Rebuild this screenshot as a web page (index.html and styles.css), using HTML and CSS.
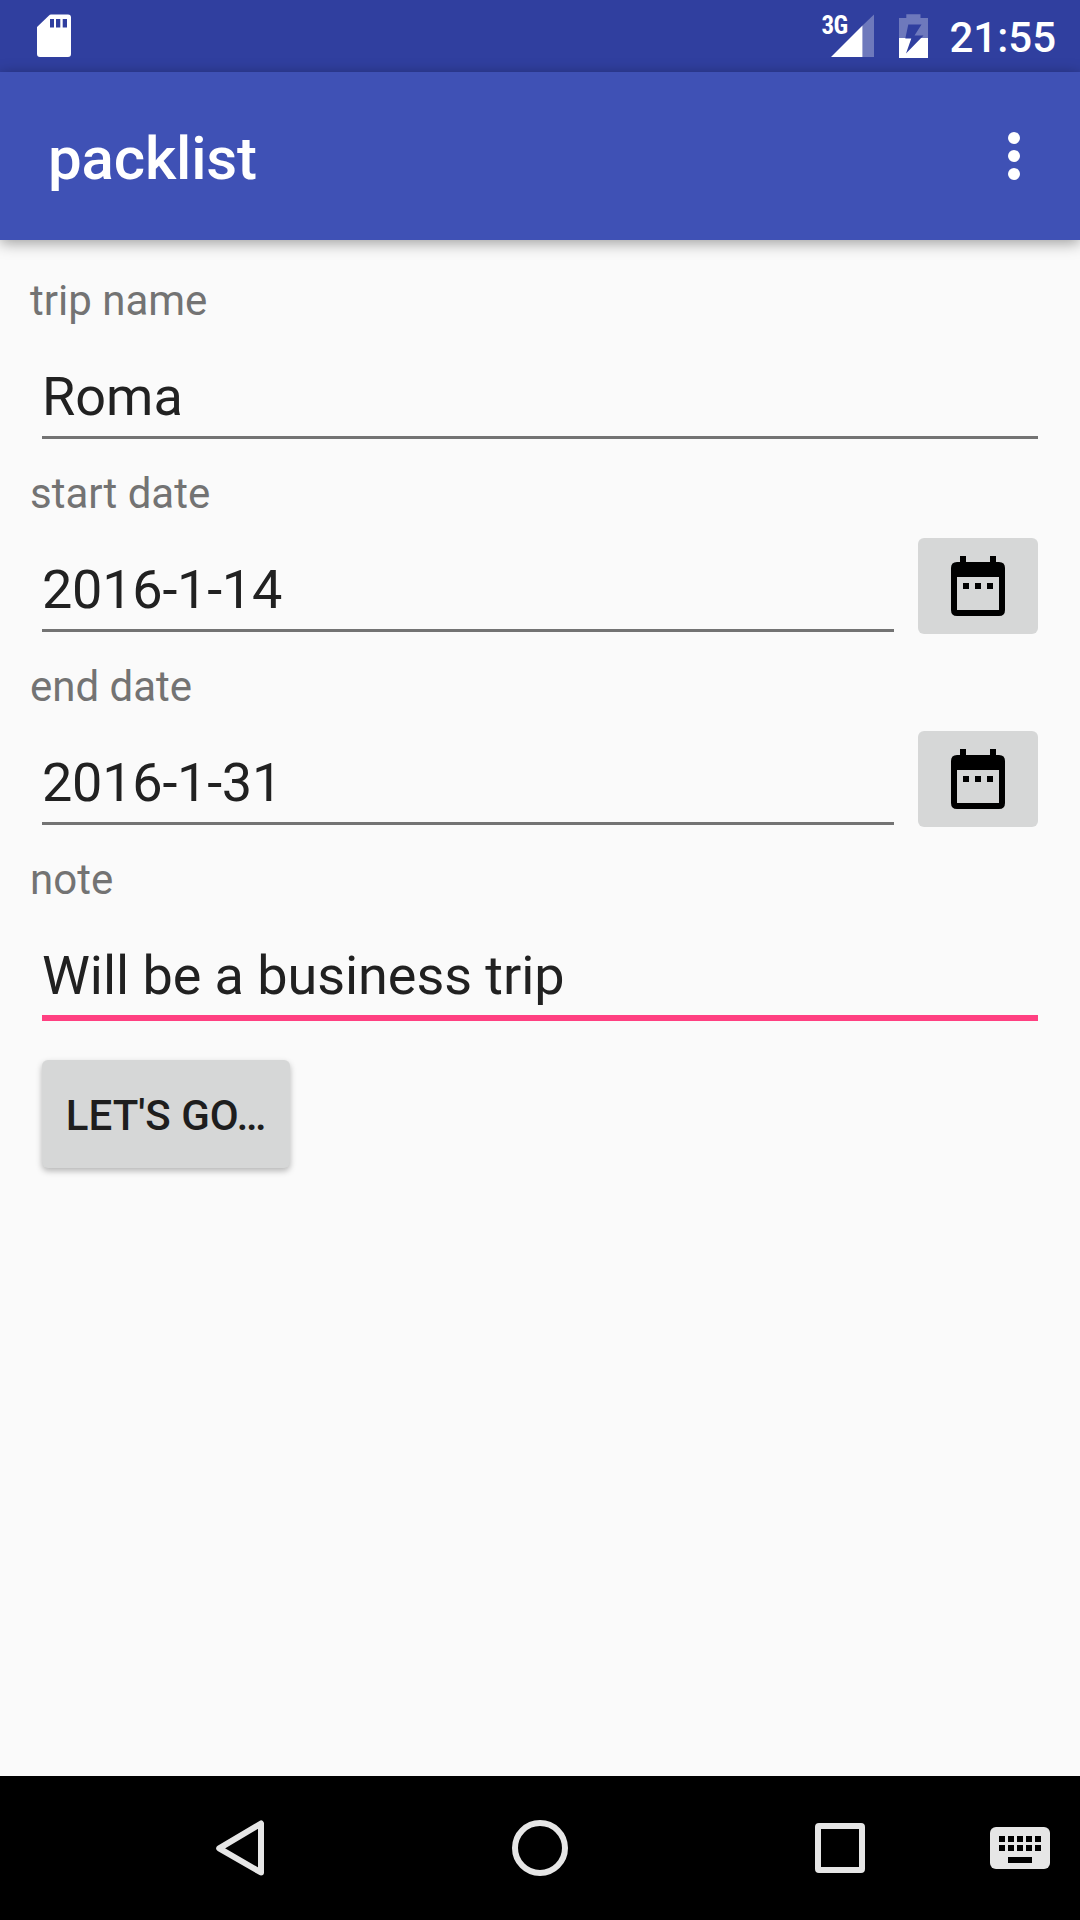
FILE: index.html
```
<!DOCTYPE html>
<html lang="en">
<head>
<meta charset="utf-8">
<title>packlist</title>
<link rel="stylesheet" href="styles.css">
</head>
<body>
<div class="screen">
  <div class="status-bar">
    <svg class="sd-icon" width="34" height="44" viewBox="0 0 34 44"><path fill="#fff" fill-rule="evenodd" d="M14 .6H31Q34 .6 34 3.6V40Q34 43 31 43H3Q0 43 0 40V13L12 1.4Q12.800 .6 14 .6ZM13 5V13.500H17V5ZM19 5V13.500H23.300V5ZM25.700 5V13.500H30V5Z"/></svg>
    <div class="status-right">
      <span class="network">3G</span>
      <svg class="signal-icon" width="43" height="44" viewBox="0 0 43 44"><path fill="#fff" fill-opacity=".3" d="M31.500 11.500 43 .5V43H31.500Z"/><path fill="#fff" d="M0 43 31.500 11.500V43Z"/></svg>
      <svg class="battery-icon" width="29" height="44" viewBox="0 0 29 44"><path fill="#fff" fill-opacity=".3" d="M7.300 .3H21.500V4H29V24H0V4H7.300Z"/><path fill="#fff" d="M0 24H29V44H0Z"/><path fill="#303f9f" d="M9.300 10.500H22.500L15.500 21.500H24.500L7 39.500L12.300 24.500H6.300Z"/></svg>
      <span class="clock">21:55</span>
    </div>
  </div>
  <header class="app-bar">
    <h1 class="title">packlist</h1>
    <svg class="menu-icon" width="12" height="48" viewBox="0 0 12 48" fill="#fff"><circle cx="6" cy="6" r="6"/><circle cx="6" cy="24" r="6"/><circle cx="6" cy="42" r="6"/></svg>
  </header>
  <main class="form">
    <div class="group">
      <div class="label">trip name</div>
      <div class="row"><div class="field">Roma</div></div>
    </div>
    <div class="group">
      <div class="label">start date</div>
      <div class="row">
        <div class="field date">2016-1-14</div>
        <div class="date-button"><svg width="54" height="60" viewBox="0 0 54 60"><path fill-rule="evenodd" d="M9 0H15V6H39V0H45V6H48Q54 6 54 12V54Q54 60 48 60H6Q0 60 0 54V12Q0 6 6 6H9ZM6 21V54H48V21ZM12 27H18V33H12ZM24 27H30V33H24ZM36 27H42V33H36Z"/></svg></div>
      </div>
    </div>
    <div class="group">
      <div class="label">end date</div>
      <div class="row">
        <div class="field date">2016-1-31</div>
        <div class="date-button"><svg width="54" height="60" viewBox="0 0 54 60"><path fill-rule="evenodd" d="M9 0H15V6H39V0H45V6H48Q54 6 54 12V54Q54 60 48 60H6Q0 60 0 54V12Q0 6 6 6H9ZM6 21V54H48V21ZM12 27H18V33H12ZM24 27H30V33H24ZM36 27H42V33H36Z"/></svg></div>
      </div>
    </div>
    <div class="group">
      <div class="label">note</div>
      <div class="row"><div class="field focused">Will be a business trip</div></div>
    </div>
    <div class="submit">LET'S GO…</div>
  </main>
  <nav class="nav-bar">
    <svg width="60" height="60" viewBox="0 0 60 60"><path d="M51 5.500V54.500L9.200 30.300Z" fill="none" stroke="#e6e6e6" stroke-width="6" stroke-linejoin="round"/></svg>
    <svg width="60" height="60" viewBox="0 0 60 60"><circle cx="30" cy="30" r="25" fill="none" stroke="#e6e6e6" stroke-width="6"/></svg>
    <svg width="60" height="60" viewBox="0 0 60 60"><path fill="#e6e6e6" fill-rule="evenodd" d="M9 5H51Q55 5 55 9V51Q55 55 51 55H9Q5 55 5 51V9Q5 5 9 5ZM11 11V49H49V11Z"/></svg>
    <svg class="keyboard-icon" width="60" height="60" viewBox="0 0 60 60"><rect y="9" width="60" height="42" rx="6" fill="#e6e6e6"/><path d="M9 18h6v6H9ZM18 18h6v6h-6ZM27 18h6v6h-6ZM36 18h6v6h-6ZM45 18h6v6h-6ZM9 27h6v6H9ZM18 27h6v6h-6ZM27 27h6v6h-6ZM36 27h6v6h-6ZM45 27h6v6h-6ZM18 39h24v6H18Z"/></svg>
  </nav>
</div>
</body>
</html>
```
FILE: styles.css
```
* {
  box-sizing: border-box;
}

body {
  margin: 0;
  font-family: Roboto, sans-serif;
  background: #fafafa;
}

svg {
  display: block;
  flex: none;
}

.screen {
  display: flex;
  flex-direction: column;
  width: 1080px;
  height: 1920px;
  overflow: hidden;
  background: #fafafa;
}

.status-bar {
  display: flex;
  justify-content: space-between;
  align-items: flex-start;
  height: 72px;
  padding: 14px 24px 0 37px;
  background: #303f9f;
  color: #fff;
}

.status-right {
  display: flex;
  align-items: flex-start;
}

.network {
  width: 27px;
  margin-right: -17px;
  font-family: "Roboto Condensed", Roboto, sans-serif;
  font-size: 25px;
  font-weight: 700;
  line-height: 24px;
  letter-spacing: -0.5px;
  white-space: nowrap;
}

.signal-icon {
  margin-right: 25px;
}

.battery-icon {
  margin-right: 21px;
}

.clock {
  font-size: 42px;
  font-weight: 500;
  line-height: 48px;
}

.app-bar {
  display: flex;
  flex: none;
  align-items: center;
  justify-content: space-between;
  position: relative;
  height: 168px;
  padding: 0 60px 0 48px;
  background: #3f51b5;
  box-shadow: 0 3px 14px rgba(0, 0, 0, 0.38);
  color: #fff;
}

.title {
  margin: 6px 0 0;
  font-size: 60px;
  font-weight: 500;
  line-height: 72px;
  letter-spacing: -0.15px;
}

.form {
  flex: 1;
  padding: 30px;
}

.group {
  height: 193px;
}

.label {
  font-size: 42px;
  line-height: 62px;
  color: #737373;
}

.row {
  display: flex;
  gap: 24px;
  padding: 0 12px;
}

.field {
  flex: 1;
  height: 107px;
  padding-top: 33px;
  border-bottom: 3px solid #737373;
  font-size: 54px;
  line-height: 64px;
  color: #212121;
}

.field.date {
  letter-spacing: -0.25px;
}

.field.focused {
  height: 110px;
  border-bottom: 6px solid #ff4081;
  letter-spacing: -0.06px;
}

.date-button {
  display: flex;
  align-items: center;
  justify-content: center;
  width: 120px;
  height: 96px;
  margin-top: 13px;
  border-radius: 6px;
  background: #d6d7d7;
}

.submit {
  width: 248px;
  height: 108px;
  margin: 18px 0 0 12px;
  border-radius: 6px;
  background: #d6d7d7;
  box-shadow: 0 3px 6px rgba(0, 0, 0, 0.28);
  color: #1e1e1e;
  font-size: 42px;
  font-weight: 500;
  line-height: 112px;
  text-align: center;
}

.nav-bar {
  display: flex;
  flex: none;
  align-items: center;
  gap: 240px;
  height: 144px;
  padding-left: 210px;
  background: #000;
}

.keyboard-icon {
  margin-left: -120px;
}
```
